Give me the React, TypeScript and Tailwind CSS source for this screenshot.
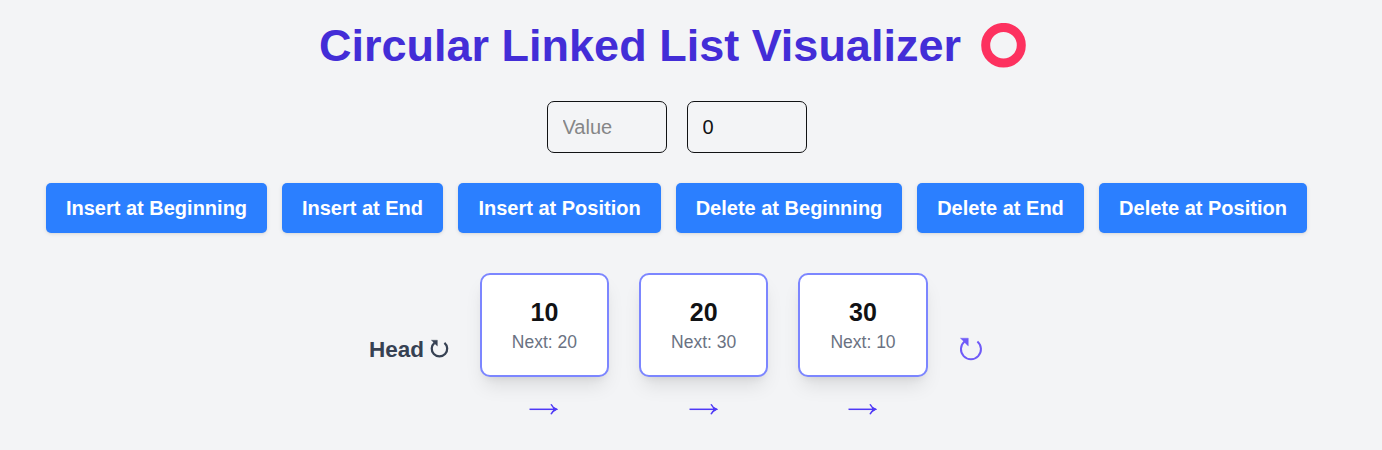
import { useState } from "react";

const actions = [
  { label: "Insert at Beginning", width: "w-[221px]" },
  { label: "Insert at End", width: "w-[161px]" },
  { label: "Insert at Position", width: "w-[203px]" },
  { label: "Delete at Beginning", width: "w-[226px]" },
  { label: "Delete at End", width: "w-[167px]" },
  { label: "Delete at Position", width: "w-[208px]" },
];

const nodes = [10, 20, 30];

function LoopIcon({ className, stroke }: { className: string; stroke: number }) {
  return (
    <svg viewBox="0 0 22 22" className={className} fill="none" overflow="visible" aria-hidden="true">
      <path d="M17.4 3.6A10 10 0 1 1 4.5 3.6" stroke="currentColor" strokeWidth={stroke} />
      <path d="M.4.2H8.3V7.9L5.6 5.4L3.6 3.2Z" fill="currentColor" stroke="currentColor" strokeWidth=".4" />
    </svg>
  );
}

function Arrow() {
  return (
    <svg viewBox="0 0 30 14" className="h-3.5 w-[30px] text-[#4f39f6]" fill="none" aria-hidden="true">
      <path d="M.5 7.3H27" stroke="currentColor" strokeWidth="1.5" />
      <path d="M22 2.3Q23.5 5.5 27.3 7.3Q23.5 9.1 22 12.3" stroke="currentColor" strokeWidth="1.5" />
      <path d="M24 5L29 7.3L24 9.6Z" fill="currentColor" />
    </svg>
  );
}

function ListNode({ value, next }: { value: number; next: number }) {
  return (
    <div className="flex flex-col items-center">
      <div className="flex h-[104px] w-[129.3px] flex-col items-center rounded-[10px] border-2 border-[#7c86ff] bg-white pt-5 shadow-[0_12px_19px_-4px_rgba(0,0,0,0.1),0_5px_8px_-5px_rgba(0,0,0,0.1)]">
        <div className="text-[25px] leading-[35px] font-bold text-[#111214]">{value}</div>
        <div className="text-[17.5px] leading-[25px] text-[#6a7282]">Next: {next}</div>
      </div>
      <div className="flex h-12 items-center pt-4">
        <Arrow />
      </div>
    </div>
  );
}

export default function App() {
  const [value, setValue] = useState("");
  const [position, setPosition] = useState("0");
  const field = "h-[52px] w-[120px] rounded-[7px] border border-[#111214] bg-transparent px-[15px] text-[20px] text-[#111214] outline-none placeholder:text-[#858687]";

  return (
    <div className="h-[450px] overflow-hidden bg-[#f3f4f6] font-['Liberation_Sans',Arial,sans-serif]">
      <main className="flex w-[1353px] flex-col items-center pt-5">
        <h1 className="flex h-[51px] items-center gap-5 pr-[7px] text-[45px] leading-[50px] font-bold whitespace-nowrap text-[#432dd7]">
          <span className="pt-px">Circular Linked List Visualizer</span>
          <svg viewBox="0 0 46 46" className="size-[46px]" aria-hidden="true">
            <circle cx="22.5" cy="22.2" r="17.8" fill="none" stroke="#fd315f" strokeWidth="9" />
          </svg>
        </h1>

        <div className="mt-[30px] flex gap-5">
          <input className={field} placeholder="Value" value={value} onChange={(e) => setValue(e.target.value)} />
          <input className={field} value={position} onChange={(e) => setPosition(e.target.value)} />
        </div>

        <div className="mt-[30px] flex gap-[15px]">
          {actions.map(({ label, width }) => (
            <button
              key={label}
              className={`${width} h-[50px] rounded-[5px] bg-[#2b7fff] text-[20px] leading-[30px] font-bold whitespace-nowrap text-white shadow-[0_1px_4px_rgba(0,0,0,0.1),0_1px_2px_-1px_rgba(0,0,0,0.1)]`}
            >
              {label}
            </button>
          ))}
        </div>

        <div className="mt-10 flex items-center gap-[30px]">
          <div className="flex items-center gap-[7px] pr-[1.7px] text-[22.5px] leading-[35px] font-bold text-[#364153]">
            Head
            <LoopIcon className="mb-px size-[17px]" stroke={2.9} />
          </div>
          {nodes.map((node, index) => (
            <ListNode key={node} value={node} next={nodes[(index + 1) % nodes.length]} />
          ))}
          <LoopIcon className="mr-[2.3px] ml-[2px] size-[22px] text-[#6f5af8]" stroke={2} />
        </div>
      </main>
    </div>
  );
}
